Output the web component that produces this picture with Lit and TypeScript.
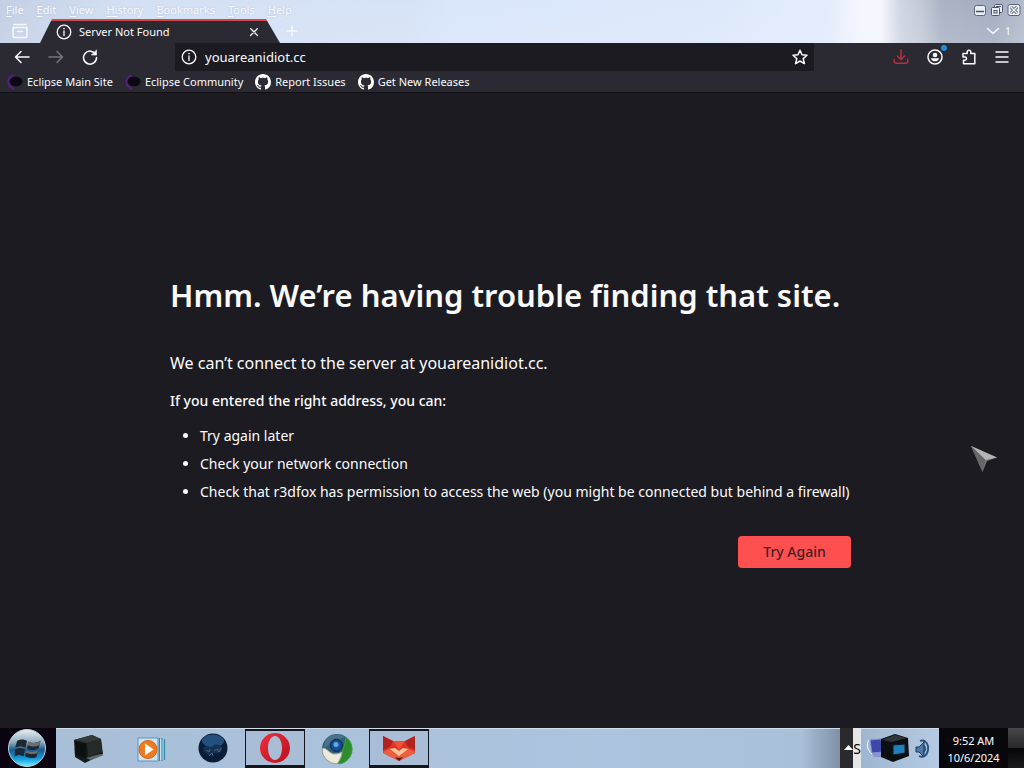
import { LitElement, html, css, svg } from "lit";
import { customElement } from "lit/decorators.js";

const infoIcon = html`<svg class="i16" viewBox="0 0 16 16" fill="none" stroke="currentColor" stroke-width="1.3" aria-hidden="true">
  <circle cx="8" cy="8" r="6.8" /><path d="M8 7v4.6" stroke-linecap="round" /><circle cx="8" cy="4.6" r=".5" fill="currentColor" stroke-width=".8" /></svg>`;

const githubIcon = html`<svg class="i16" viewBox="0 0 16 16" fill="#fff" aria-hidden="true">
  <path d="M8 0C3.58 0 0 3.58 0 8c0 3.54 2.29 6.53 5.47 7.59.4.07.55-.17.55-.38 0-.19-.01-.82-.01-1.49-2.01.37-2.53-.49-2.69-.94-.09-.23-.48-.94-.82-1.13-.28-.15-.68-.52-.01-.53.63-.01 1.08.58 1.23.82.72 1.21 1.87.87 2.33.66.07-.52.28-.87.51-1.07-1.78-.2-3.64-.89-3.64-3.95 0-.87.31-1.59.82-2.15-.08-.2-.36-1.02.08-2.12 0 0 .67-.21 2.2.82.64-.18 1.32-.27 2-.27s1.36.09 2 .27c1.53-1.04 2.2-.82 2.2-.82.44 1.1.16 1.92.08 2.12.51.56.82 1.27.82 2.15 0 3.07-1.87 3.75-3.65 3.95.29.25.54.73.54 1.48 0 1.07-.01 1.93-.01 2.2 0 .21.15.46.55.38A8.01 8.01 0 0 0 16 8c0-4.42-3.58-8-8-8z" /></svg>`;

const eclipseIcon = html`<svg class="i16" viewBox="0 0 16 16" aria-hidden="true">
  <path d="M6 1.500A7.500 7 0 0 0 6.500 14.500" fill="none" stroke="#5a1e82" stroke-width="2" stroke-linecap="round" />
  <ellipse cx="9" cy="7.500" rx="6.500" ry="4.800" fill="#0c0914" /></svg>`;

const stroke = (body: unknown, cls = "") => html`<svg class="i16 ${cls}" viewBox="0 0 16 16" fill="none" stroke="currentColor" stroke-width="1.5" stroke-linecap="round" stroke-linejoin="round" aria-hidden="true">${body}</svg>`;

const backIcon = stroke(svg`<path d="M15 8H1.5M7 2.5 1.5 8 7 13.5" />`);
const forwardIcon = stroke(svg`<path d="M1 8h13.5M9 2.5 14.500 8 9 13.500" />`);
const reloadIcon = stroke(svg`<path d="M13.700 5.500A6.500 6.500 0 1 0 14.500 8.500" /><path d="M14.500 1.200v4.800H9.700z" fill="currentColor" stroke-width=".6" />`);
const starIcon = stroke(svg`<path d="m8 1.200 2 4.600 5 .5-3.800 3.300 1.200 5L8 12l-4.400 2.600 1.200-5L1 6.300l5-.5z" />`);
const downloadIcon = stroke(svg`<path d="M8 1v9M4.500 7 8 10.500 11.500 7M1.200 10.500v1.500a2.300 2.300 0 0 0 2.300 2.300h9a2.300 2.300 0 0 0 2.300-2.300v-1.500" />`);
const accountIcon = stroke(svg`<circle cx="8" cy="8" r="7" /><circle cx="8" cy="6" r="2.300" fill="currentColor" stroke="none" /><path d="M3.800 9.200h8.400a4.400 4.400 0 0 1-8.400 0z" fill="currentColor" stroke="none" />`);
const puzzleIcon = stroke(svg`<path d="M2 4.500h4.200V3a1.800 1.800 0 0 1 3.600 0v1.500h4v10.300H2.500v-3.600h1.400a1.600 1.600 0 0 0 0-3.200H2z" />`);
const menuIcon = stroke(svg`<path d="M2 3h12M2 8h12M2 13h12" />`);
const closeIcon = stroke(svg`<path d="m4 4 8 8M12 4l-8 8" />`);
const plusIcon = stroke(svg`<path d="M8 3v10M3 8h10" />`);
const chevronIcon = stroke(svg`<path d="m2.500 5.500 5.500 5 5.500-5" />`);
const firefoxViewIcon = stroke(svg`<path d="M2 1.500h12M1 4.500h14v8a2 2 0 0 1-2 2H3a2 2 0 0 1-2-2zM5.500 8.500h5" />`);

const minimizeIcon = html`<svg class="i16" viewBox="0 0 16 16" aria-hidden="true"><rect x="2.500" y="3.500" width="11" height="10" rx="2" fill="#e9eef6" stroke="#5c6678" /><path d="M4 9.500h8" stroke="#475064" stroke-width="1.500" /></svg>`;
const restoreIcon = html`<svg class="i16" viewBox="0 0 16 16" fill="#e9eef6" stroke="#4b556a" aria-hidden="true"><rect x="5.500" y="2.500" width="8" height="8" rx="1" /><path d="M7 4.500h5" /><rect x="2.500" y="5.500" width="8" height="8" rx="1" /><rect x="5" y="8.500" width="3" height="2.500" /></svg>`;
const shutIcon = html`<svg class="i16" viewBox="0 0 16 16" aria-hidden="true"><rect x="2" y="2.500" width="12" height="11" rx="2" fill="#e9eef6" stroke="#5c6678" /><path d="m5 5 6 6M11 5l-6 6" stroke="#475064" stroke-width="3" /><path d="m5 5 6 6M11 5l-6 6" stroke="#fff" stroke-width="1.300" /></svg>`;

const startOrb = html`<svg class="orb" viewBox="0 0 40 40" aria-hidden="true">
  <defs>
    <linearGradient id="orb" x1="0" y1="0" x2="0" y2="1"><stop offset="0" stop-color="#e9eff4" /><stop offset=".35" stop-color="#8fa9bd" /><stop offset=".55" stop-color="#175a8a" /><stop offset=".8" stop-color="#14a0e0" /><stop offset="1" stop-color="#7ff0ff" /></linearGradient>
  </defs>
  <circle cx="19" cy="20" r="18.500" fill="url(#orb)" stroke="#b9d3e2" />
  <path d="M9 13c3-2 7-2 10 0l-1.500 7c-3-2-7-2-10.300 0zM20.500 13.500c3 2 7 2 12-.5l-2 7.500c-4 2-8 2-11.500 0zM7 21.500c3-2 7-2 10 0l-1.500 7c-3-2-6-2-9 0zM18.500 22c3 2 7 2 11.500.2l-1.500 7c-4 1.500-8 1-11.500-.9z" fill="#1d2834" />
  <path d="M20.500 13.500c3 2 7 2 12-.5l-1 4c-4 2-8 2-12 0zM18.500 22c3 2 7 2 11.500.2l-.7 3c-4 1.500-8 1-11.500-.5z" fill="#6c6e70" />
</svg>`;

const computerIcon = html`<svg class="app" viewBox="0 0 32 32" aria-hidden="true">
  <path d="M1 7 19 2l9 4 2 15-10 5-8 4L2 24z" fill="#151a1a" /><path d="M1 7 19 2l9 4-14 4z" fill="#343a38" /><path d="M14 10l14-4 1 13-14 5z" fill="#262b29" /><path d="m13 25 14-4 4 1-13 5z" fill="#5c6767" /><path d="m2 8 11 3v14L3 22z" fill="#0d1011" />
</svg>`;
const mediaIcon = html`<svg class="app" viewBox="0 0 32 32" aria-hidden="true">
  <path d="M24 6h4v21h-4z" fill="#dce9f4" /><path d="M24.500 5v23M27 5v23M29.500 6v21" stroke="#3388a8" stroke-width="1.200" />
  <rect x="3" y="5" width="20" height="23" fill="#cde2f3" stroke="#5b95bd" /><circle cx="13" cy="16.500" r="9" fill="#ee7b1f" stroke="#d2640f" /><path d="M10 10.500v12l8.500-6z" fill="#fff" />
</svg>`;
const globeIcon = html`<svg class="app" viewBox="0 0 32 32" aria-hidden="true">
  <circle cx="16" cy="15" r="14.500" fill="#0b1d36" /><ellipse cx="16" cy="8" rx="11" ry="6.500" fill="#24507f" /><path d="M6 15c4-4 7 1 10-2s6-1 9 1c1 4-3 7-6 6s-5 5-8 2-5-3-5-7z" fill="#163253" /><path d="M9 17l3 2 1-3M17 18l3-2 2 3 2-4M12 23l3-3 1 3" stroke="#4a6482" fill="none" />
</svg>`;
const operaIcon = html`<svg class="app" viewBox="0 0 32 32" aria-hidden="true">
  <defs><linearGradient id="op" x1="0" y1="0" x2="1" y2="1"><stop offset="0" stop-color="#ee2f3c" /><stop offset="1" stop-color="#b9101f" /></linearGradient></defs>
  <path fill-rule="evenodd" d="M16 1a15 15 0 1 1 0 30 15 15 0 1 1 0-30zM16 4c-4 0-7 5-7 12s3 12 7 12 7-5 7-12-3-12-7-12z" fill="url(#op)" />
</svg>`;
const deskIcon = html`<svg class="app" viewBox="0 0 32 32" aria-hidden="true">
  <circle cx="16" cy="16" r="15" fill="#2f5f79" /><path d="M25 4a15 15 0 0 1-7 27c-2-5 5-11 7-27z" fill="#2c8c2e" stroke="#3aa53a" /><path d="M1 16c4-3 6 4 12 5 4 0 6-1 8-2 0 4-2 8-5 12A15 15 0 0 1 1 16z" fill="#eceadb" stroke="#9da28e" />
  <path d="M4 8A15 15 0 0 1 24 4l-5 2a8 8 0 0 0-11 6l-5 3z" fill="#4a7389" /><circle cx="15.500" cy="12.500" r="6" fill="#164f91" stroke="#0b2548" /><circle cx="15" cy="11.500" r="2.500" fill="#67a6e6" />
</svg>`;
const foxIcon = html`<svg class="fox" viewBox="0 0 34 28" aria-hidden="true">
  <path d="M1 2l10 5h12l10-5v17L17 27 1 19z" fill="#dc3527" /><path d="M1 2l10 5-3 6-7 3zM33 2 23 7l3 6 7 3z" fill="#b3221e" /><path d="M11 7h12l-6 9z" fill="#ee5138" /><path d="m1 18 8-4 8 5 8-5 8 4-5 4-11 4-11-4z" fill="#e9603f" /><path d="m8 15 5-1 4 3 4-3 5 1-9 7z" fill="#ffc39c" /><path d="m13 23 4 1 4-1-4 4z" fill="#5c1412" />
</svg>`;

const trayIcons = html`<svg class="tray-art" viewBox="0 0 72 36" aria-hidden="true">
  <path d="M6 9 17 8l2 13-11 1z" fill="#3d48ab" stroke="#7f8cd0" /><path d="M8 22h9l2 4H10z" fill="#8b93d5" /><path d="M5 9c-3 4-2 10 3 14" stroke="#f5f8ff" fill="none" />
  <path d="M17 8 31 3l13 4 1 18-16 6-12-5z" fill="#0c0f12" /><path d="M18 9 31 4l12 3-15 4z" fill="#303538" /><path d="M29 14l12-1v9l-12 2z" fill="#1f7fb8" stroke="#0a1a25" />
  <path d="M52 16h3l5-5v15l-5-5h-3z" fill="#4f7aa6" stroke="#17395f" /><path d="M56 10c5-2 9 3 8 9s-5 8-9 6M59 14c3 2 3 5 0 8" stroke="#264e7d" stroke-width="1.800" fill="none" />
</svg>`;

const menus = [["F", "ile"], ["E", "dit"], ["V", "iew"], ["Hi", "story"], ["B", "ookmarks"], ["T", "ools"], ["H", "elp"]];
const bookmarks = [
  { label: "Eclipse Main Site", icon: eclipseIcon },
  { label: "Eclipse Community", icon: eclipseIcon },
  { label: "Report Issues", icon: githubIcon },
  { label: "Get New Releases", icon: githubIcon },
];
const apps = [
  { label: "Computer", icon: computerIcon, open: false },
  { label: "Media Player", icon: mediaIcon, open: false },
  { label: "Network", icon: globeIcon, open: false },
  { label: "Opera", icon: operaIcon, open: true },
  { label: "Desktop browser", icon: deskIcon, open: false },
  { label: "r3dfox", icon: foxIcon, open: true },
];

@customElement("browser-chrome")
class BrowserChrome extends LitElement {
  static styles = css`
    :host { display: block; color: #fbfbfe; font: 11px/16px "Noto Sans", "Open Sans", sans-serif; }
    button { display: grid; place-items: center; padding: 0; border: 0; background: none; color: inherit; font: inherit; }
    .i16 { display: block; width: 16px; height: 16px; flex: none; }
    .frame { background: linear-gradient(transparent, rgba(240, 240, 255, .15)), linear-gradient(90deg, #c3cfe4 0, #d3e0f3 12%, #d6e3f6 40%, #d9e6fb 44%, #dde9fa 70%, #e4edfb 81%, #f5f7fe 84%, #f6f7fd 86%, #cfd5e2 88%, #c3cad6 90%, #aab3c3 92%, #a3adbf 97%, #b4bccb 100%); height: 43px; display: grid; grid-template-rows: 19px 24px; }
    .top { display: flex; justify-content: space-between; }
    .menubar { display: flex; gap: 13px; padding-left: 6px; line-height: 20px; }
    .menubar button { display: block; color: #f6f9fe; text-shadow: 0 0 2px #b3bfd4; }
    .menubar u { text-underline-offset: 2px; }
    .winctl { display: flex; gap: 1px; padding: 1px 2px 0 0; }
    .tabs { display: flex; align-items: stretch; color: #f6f8fd; }
    .view { width: 40px; }
    .tab { width: 240px; display: flex; align-items: center; gap: 7px; padding: 1px 16px 0 16px; box-sizing: border-box; color: #fbfbfe; background: linear-gradient(#d24b4b 2px, #2b2a33 2px); clip-path: polygon(0 100%, 12px 0, 226px 0, 100% 100%); }
    .title { flex: 1; white-space: nowrap; }
    .tab .close { width: 16px; margin-right: 2px; }
    .close .i16 { width: 14px; height: 14px; }
    .new { width: 24px; }
    .all { display: flex; align-items: center; gap: 4px; margin-left: auto; padding-right: 13px; }
    .nav { display: flex; align-items: center; height: 28px; background: #2b2a33; padding: 0 12px; }
    .nav button { width: 34px; height: 26px; }
    .nav .first { width: 20px; margin-right: 7px; }
    .nav .dim { color: #77767e; }
    .url { display: flex; flex: 1; align-items: center; gap: 8px; margin: 0 70px 0 68px; height: 28px; padding-left: 6px; background: #1c1b22; }
    .url input { flex: 1; min-width: 0; border: 0; padding: 0; background: none; color: inherit; font: 13px/20px "Noto Sans", "Open Sans", sans-serif; outline: 0; }
    .nav .url button { width: 28px; }
    .nav .save { color: #b9303f; }
    .nav .menu { width: 32px; margin-right: -6px; }
    .account { position: relative; }
    .account::after { content: ""; position: absolute; top: 1px; right: 5px; width: 6px; height: 6px; border-radius: 50%; background: #1b8fd8; }
    .marks { display: flex; gap: 12px; height: 21px; padding-left: 7px; background: #2b2a33; border-bottom: 1px solid #101015; }
    .marks a { display: flex; align-items: center; gap: 4px; color: inherit; text-decoration: none; white-space: nowrap; }
  `;
  render() {
    return html`
      <div class="frame">
        <div class="top">
          <div class="menubar">${menus.map(([key, rest]) => html`<button><u>${key}</u>${rest}</button>`)}</div>
          <div class="winctl">
            <button aria-label="Minimize">${minimizeIcon}</button><button aria-label="Restore">${restoreIcon}</button><button aria-label="Close window">${shutIcon}</button>
          </div>
        </div>
        <div class="tabs">
          <button class="view" aria-label="View">${firefoxViewIcon}</button>
          <div class="tab">${infoIcon}<span class="title">Server Not Found</span><button class="close" aria-label="Close tab">${closeIcon}</button></div>
          <button class="new" aria-label="New tab">${plusIcon}</button>
          <button class="all" aria-label="List all tabs">${chevronIcon}<span>1</span></button>
        </div>
      </div>
      <div class="nav">
        <button class="first" aria-label="Back">${backIcon}</button>
        <button class="dim" aria-label="Forward">${forwardIcon}</button>
        <button aria-label="Reload">${reloadIcon}</button>
        <div class="url">${infoIcon}<input aria-label="Address" value="youareanidiot.cc" spellcheck="false" /><button aria-label="Bookmark this page">${starIcon}</button></div>
        <button class="save" aria-label="Downloads">${downloadIcon}</button>
        <button class="account" aria-label="Account">${accountIcon}</button>
        <button aria-label="Extensions">${puzzleIcon}</button>
        <button class="menu" aria-label="Application menu">${menuIcon}</button>
      </div>
      <div class="marks">${bookmarks.map((b) => html`<a href="#">${b.icon}<span>${b.label}</span></a>`)}</div>`;
  }
}

@customElement("error-page")
class ErrorPage extends LitElement {
  static styles = css`
    :host { display: block; flex: 1; padding: 176px 16px 16px; background: #1c1b22; color: #fbfbfe; font: 14px/20px "Noto Sans", "Open Sans", sans-serif; }
    .box { max-width: 684px; margin: 0 auto; }
    h1 { margin: 0 0 30px; font-size: 31px; line-height: 52px; font-weight: 600; }
    .lead { margin: 0 0 14px; font-size: 16px; line-height: 24px; }
    h2 { margin: 0 0 11px; font-size: 14px; line-height: 24px; font-weight: 500; }
    ul { margin: 0; padding-left: 30px; }
    li { line-height: 24px; margin-bottom: 4px; }
    .actions { display: flex; justify-content: flex-end; padding: 28px 3px 0 0; }
    button { width: 113px; height: 32px; border: 0; border-radius: 4px; background: #ff4f4f; color: #3f2027; font: inherit; font-weight: 500; }
  `;
  render() {
    return html`<div class="box">
      <h1>Hmm. We’re having trouble finding that site.</h1>
      <p class="lead">We can’t connect to the server at youareanidiot.cc.</p>
      <h2>If you entered the right address, you can:</h2>
      <ul>
        <li>Try again later</li>
        <li>Check your network connection</li>
        <li>Check that r3dfox has permission to access the web (you might be connected but behind a firewall)</li>
      </ul>
      <div class="actions"><button>Try Again</button></div>
    </div>`;
  }
}

@customElement("task-bar")
class TaskBar extends LitElement {
  static styles = css`
    :host { display: flex; height: 40px; background: #08080c; color: #fff; font: 11px/17px "Noto Sans", "Open Sans", sans-serif; }
    button { display: grid; place-items: center; padding: 0; border: 0; background: none; color: inherit; }
    svg { display: block; }
    .start { width: 56px; background: #0b0410; }
    .orb { width: 40px; height: 40px; }
    .apps { flex: 1; display: flex; gap: 2px; padding-left: 3px; background: linear-gradient(90deg, #a9bfd8, #acc4df 70%, #a9c0d9 95%, #7f91a7); border-top: 1px solid #d3dde8; }
    .apps button { width: 60px; }
    .apps .open { border: solid #14161c; border-width: 2px 1px 3px; background: #a9bed6; }
    .app { width: 32px; height: 32px; }
    .fox { width: 34px; height: 28px; }
    .lang { width: 21px; display: flex; align-items: center; justify-content: flex-end; background: linear-gradient(90deg, #2a2a2d 13px, #e4e6e8 13px); color: #050507; font-size: 14px; }
    .lang svg { width: 9px; height: 8px; }
    .tray { width: 78px; background: linear-gradient(90deg, #9fb6d0, #b5cae2); border-top: 1px solid #d3dde8; box-sizing: border-box; display: grid; place-items: center; }
    .tray-art { width: 72px; height: 36px; }
    .clock { width: 69px; text-align: center; padding-top: 4px; }
    .peek { width: 16px; background: linear-gradient(#47474a, #29292c 49%, #050507 50%, #1b1b1e); }
  `;
  render() {
    return html`
      <button class="start" aria-label="Start">${startOrb}</button>
      <div class="apps">${apps.map((a) => html`<button class=${a.open ? "open" : ""} aria-label=${a.label}>${a.icon}</button>`)}</div>
      <div class="lang"><svg viewBox="0 0 9 8" aria-hidden="true"><path d="M0 6 4.500 1 9 6z" fill="#fff" /></svg><span>S</span></div>
      <div class="tray">${trayIcons}</div>
      <div class="clock"><div>9:52 AM</div><div>10/6/2024</div></div>
      <button class="peek" aria-label="Show desktop"></button>`;
  }
}

@customElement("app-root")
class AppRoot extends LitElement {
  static styles = css`
    :host { display: flex; flex-direction: column; min-height: 100vh; position: relative; background: #1c1b22; }
    .cursor { position: absolute; left: 971px; top: 446px; width: 27px; height: 27px; pointer-events: none; }
  `;
  render() {
    return html`<browser-chrome></browser-chrome><error-page></error-page><task-bar></task-bar>
      <svg class="cursor" viewBox="0 0 27 27" aria-hidden="true"><path d="M0 0 26 11.500 16 15 11.500 26z" fill="#77777b" /><path d="M0 0 26 11.500 14.500 14z" fill="#b4b4b6" /><path d="M0 0 14.500 14 11.500 26z" fill="#66666a" /></svg>`;
  }
}
